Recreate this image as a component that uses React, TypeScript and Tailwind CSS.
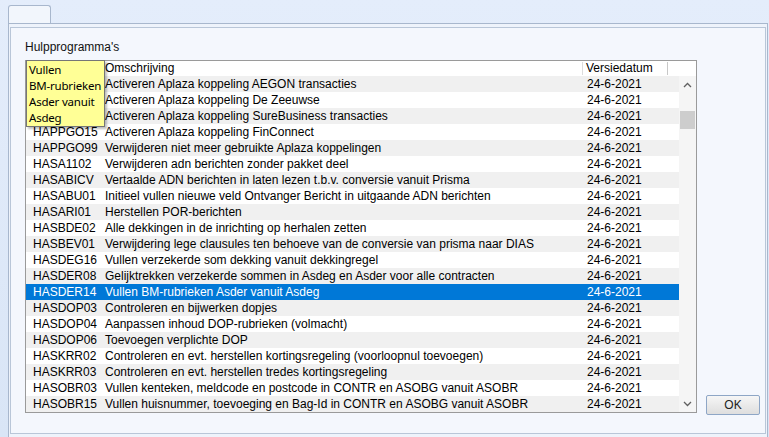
import React from 'react';

type Row = { code: string; desc: string; date: string };

const rows: Row[] = [
  { code: 'HAPPGO01', desc: 'Activeren Aplaza koppeling AEGON transacties', date: '24-6-2021' },
  { code: 'HAPPGO02', desc: 'Activeren Aplaza koppeling De Zeeuwse', date: '24-6-2021' },
  { code: 'HAPPGO03', desc: 'Activeren Aplaza koppeling SureBusiness transacties', date: '24-6-2021' },
  { code: 'HAPPGO15', desc: 'Activeren Aplaza koppeling FinConnect', date: '24-6-2021' },
  { code: 'HAPPGO99', desc: 'Verwijderen niet meer gebruikte Aplaza koppelingen', date: '24-6-2021' },
  { code: 'HASA1102', desc: 'Verwijderen adn berichten zonder pakket deel', date: '24-6-2021' },
  { code: 'HASABICV', desc: 'Vertaalde ADN berichten in laten lezen t.b.v. conversie vanuit Prisma', date: '24-6-2021' },
  { code: 'HASABU01', desc: 'Initieel vullen nieuwe veld Ontvanger Bericht in uitgaande ADN berichten', date: '24-6-2021' },
  { code: 'HASARI01', desc: 'Herstellen POR-berichten', date: '24-6-2021' },
  { code: 'HASBDE02', desc: 'Alle dekkingen in de inrichting op herhalen zetten', date: '24-6-2021' },
  { code: 'HASBEV01', desc: 'Verwijdering lege clausules ten behoeve van de conversie van prisma naar DIAS', date: '24-6-2021' },
  { code: 'HASDEG16', desc: 'Vullen verzekerde som dekking vanuit dekkingregel', date: '24-6-2021' },
  { code: 'HASDER08', desc: 'Gelijktrekken verzekerde sommen in Asdeg en Asder voor alle contracten', date: '24-6-2021' },
  { code: 'HASDER14', desc: 'Vullen BM-rubrieken Asder vanuit Asdeg', date: '24-6-2021' },
  { code: 'HASDOP03', desc: 'Controleren en bijwerken dopjes', date: '24-6-2021' },
  { code: 'HASDOP04', desc: 'Aanpassen inhoud DOP-rubrieken (volmacht)', date: '24-6-2021' },
  { code: 'HASDOP06', desc: 'Toevoegen verplichte DOP', date: '24-6-2021' },
  { code: 'HASKRR02', desc: 'Controleren en evt. herstellen kortingsregeling (voorloopnul toevoegen)', date: '24-6-2021' },
  { code: 'HASKRR03', desc: 'Controleren en evt. herstellen tredes kortingsregeling', date: '24-6-2021' },
  { code: 'HASOBR03', desc: 'Vullen kenteken, meldcode en postcode in CONTR en ASOBG vanuit ASOBR', date: '24-6-2021' },
  { code: 'HASOBR15', desc: 'Vullen huisnummer, toevoeging en Bag-Id in CONTR en ASOBG vanuit ASOBR', date: '24-6-2021' },
];

const SELECTED = 13;
// rows whose code cell sits under the tooltip
const COVERED = 3;

const Chevron = ({ up }: { up?: boolean }) => (
  <svg width="9" height="6" viewBox="0 0 9 6">
    <path
      d={up ? 'M1 5 L4.5 1.5 L8 5' : 'M1 1 L4.5 4.5 L8 1'}
      fill="none"
      stroke="#606060"
      strokeWidth="1.3"
    />
  </svg>
);

const App: React.FC = () => {
  return (
    <div className="w-[769px] h-[437px] overflow-hidden bg-gradient-to-b from-[#e4edfb] to-[#d9e5f6] flex flex-col font-['Liberation_Sans',Arial,sans-serif] text-[12px] text-black">
      {/* tab strip */}
      <div className="h-[23px] flex items-end pl-[8px] shrink-0">
        <div className="w-[43px] h-[18px] border border-b-0 border-[#a8b7cd] rounded-t-[3px] bg-[#f2f6fc]" />
      </div>

      {/* tab page */}
      <div className="flex-1 ml-[8px] mr-[1px] border-t border-l border-r border-[#a8b7cd] bg-[#eef3fb] flex flex-col">
        <div className="flex-1 mt-[3px] ml-[1px] mr-[1px] mb-[3px] border border-[#b9c6d8] bg-[#f4f7fd] flex items-end pl-[14px] pb-[20px]">
          <div className="flex flex-col">
            <div className="leading-[14px] mb-[6px] text-[#111]">Hulpprogramma's</div>

            {/* list view */}
            <div className="relative w-[672px] h-[353px] border border-[#9a9a9a] bg-white flex flex-col">
              {/* header */}
              <div className="h-[15px] flex shrink-0 bg-white">
                <div className="w-[76px] border-r border-[#dcdcdc] my-[1px]" />
                <div className="w-[481px] pl-[3px] border-r border-[#dcdcdc] my-[1px] leading-[13px]">Omschrijving</div>
                <div className="w-[85px] pl-[3px] border-r border-[#c8c8c8] my-[1px] leading-[13px]">Versiedatum</div>
                <div className="flex-1" />
              </div>

              <div className="flex flex-1">
                <div className="flex-1 flex flex-col">
                  {rows.map((r, i) => {
                    const sel = i === SELECTED;
                    const bg = sel ? 'bg-[#0078d7] text-white' : i % 2 === 0 ? 'bg-[#f0f0f0]' : 'bg-white';
                    return (
                      <div key={r.code} className={`h-[16px] flex leading-[16px] whitespace-nowrap ${bg}`}>
                        <div className={`w-[76px] pl-[7px] ${i < COVERED ? 'invisible' : ''}`}>{r.code}</div>
                        <div className="w-[481px] pl-[3px] overflow-hidden">{r.desc}</div>
                        <div className="w-[85px] pl-[4px]">{r.date}</div>
                      </div>
                    );
                  })}
                </div>

                {/* scrollbar */}
                <div className="w-[17px] bg-[#f5f5f5] flex flex-col items-center">
                  <div className="h-[17px] flex items-center justify-center">
                    <Chevron up />
                  </div>
                  <div className="mt-[18px] w-[15px] h-[18px] bg-[#cdcdcd]" />
                  <div className="flex-1" />
                  <div className="h-[17px] flex items-center justify-center">
                    <Chevron />
                  </div>
                </div>
              </div>

              {/* tooltip */}
              <div className="absolute left-[0px] top-[-1px] w-[79px] h-[67px] bg-[#ffff96] border border-[#767676] shadow-[2px_2px_2px_rgba(0,0,0,0.25)] pl-[2px] pt-[1px] font-['Noto_Sans',sans-serif] text-[11.5px] tracking-[-0.2px] leading-[16px] text-black">
                <div>Vullen</div>
                <div>BM-rubrieken</div>
                <div>Asder vanuit</div>
                <div>Asdeg</div>
              </div>
            </div>
          </div>

          <button className="ml-[9px] mb-[-2px] w-[54px] h-[20px] border border-[#8ea6c6] rounded-[2px] bg-gradient-to-b from-[#f6f6f6] to-[#dedede] text-[12px] text-[#222] leading-[18px]">
            OK
          </button>
        </div>
      </div>
    </div>
  );
};

export default App;
